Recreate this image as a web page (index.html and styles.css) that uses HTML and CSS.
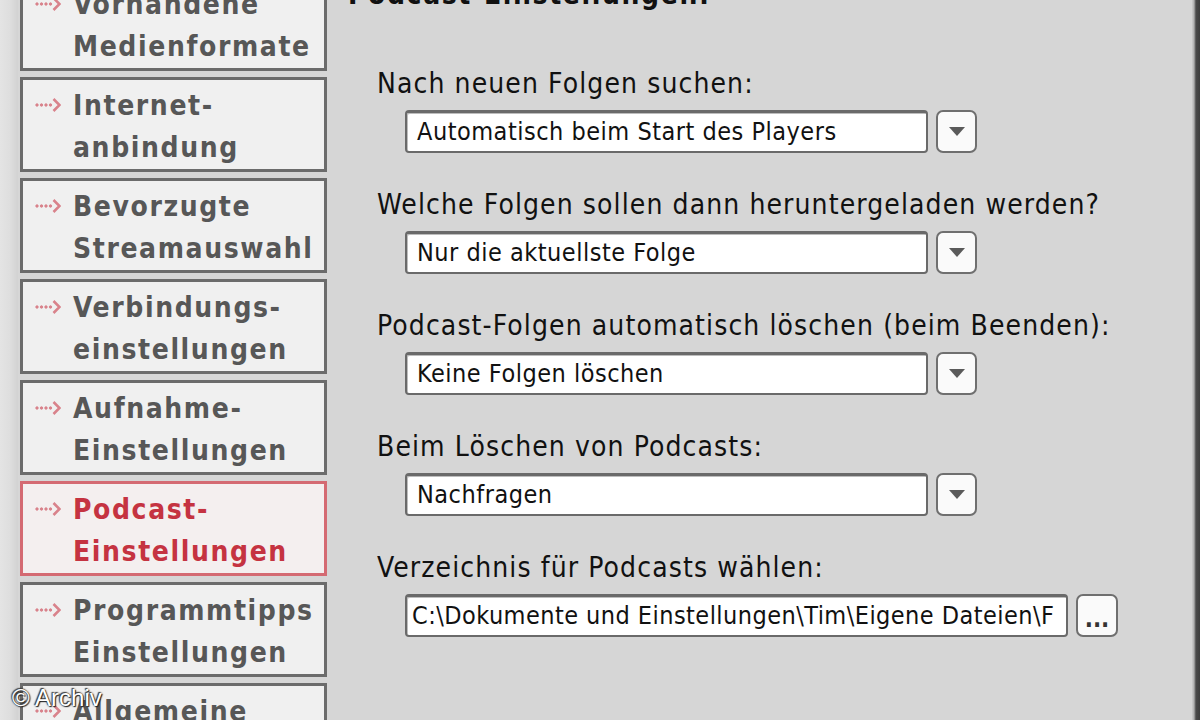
FILE: index.html
```html
<!DOCTYPE html>
<html lang="de">
<head>
<meta charset="utf-8">
<title>Podcast-Einstellungen</title>
<link rel="stylesheet" href="styles.css">
</head>
<body>
<div class="window">
  <nav class="sidebar">
    <div class="strip"></div>
    <ul class="nav">
      <li class="item"><span class="arrow"><svg viewBox="0 0 26 16" width="26" height="16"><circle cx="2" cy="8" r="1.2"/><circle cx="6.5" cy="8" r="1.2"/><circle cx="11" cy="8" r="1.2"/><circle cx="15.5" cy="8" r="1.2"/><path d="M18.5 2 L24.5 8 L18.5 14" fill="none" stroke-width="2.6"/></svg></span><span class="label">Vorhandene<br>Medienformate</span></li>
      <li class="item"><span class="arrow"><svg viewBox="0 0 26 16" width="26" height="16"><circle cx="2" cy="8" r="1.2"/><circle cx="6.5" cy="8" r="1.2"/><circle cx="11" cy="8" r="1.2"/><circle cx="15.5" cy="8" r="1.2"/><path d="M18.5 2 L24.5 8 L18.5 14" fill="none" stroke-width="2.6"/></svg></span><span class="label">Internet-<br>anbindung</span></li>
      <li class="item"><span class="arrow"><svg viewBox="0 0 26 16" width="26" height="16"><circle cx="2" cy="8" r="1.2"/><circle cx="6.5" cy="8" r="1.2"/><circle cx="11" cy="8" r="1.2"/><circle cx="15.5" cy="8" r="1.2"/><path d="M18.5 2 L24.5 8 L18.5 14" fill="none" stroke-width="2.6"/></svg></span><span class="label">Bevorzugte<br>Streamauswahl</span></li>
      <li class="item"><span class="arrow"><svg viewBox="0 0 26 16" width="26" height="16"><circle cx="2" cy="8" r="1.2"/><circle cx="6.5" cy="8" r="1.2"/><circle cx="11" cy="8" r="1.2"/><circle cx="15.5" cy="8" r="1.2"/><path d="M18.5 2 L24.5 8 L18.5 14" fill="none" stroke-width="2.6"/></svg></span><span class="label">Verbindungs-<br>einstellungen</span></li>
      <li class="item"><span class="arrow"><svg viewBox="0 0 26 16" width="26" height="16"><circle cx="2" cy="8" r="1.2"/><circle cx="6.5" cy="8" r="1.2"/><circle cx="11" cy="8" r="1.2"/><circle cx="15.5" cy="8" r="1.2"/><path d="M18.5 2 L24.5 8 L18.5 14" fill="none" stroke-width="2.6"/></svg></span><span class="label">Aufnahme-<br>Einstellungen</span></li>
      <li class="item active"><span class="arrow"><svg viewBox="0 0 26 16" width="26" height="16"><circle cx="2" cy="8" r="1.2"/><circle cx="6.5" cy="8" r="1.2"/><circle cx="11" cy="8" r="1.2"/><circle cx="15.5" cy="8" r="1.2"/><path d="M18.5 2 L24.5 8 L18.5 14" fill="none" stroke-width="2.6"/></svg></span><span class="label">Podcast-<br>Einstellungen</span></li>
      <li class="item"><span class="arrow"><svg viewBox="0 0 26 16" width="26" height="16"><circle cx="2" cy="8" r="1.2"/><circle cx="6.5" cy="8" r="1.2"/><circle cx="11" cy="8" r="1.2"/><circle cx="15.5" cy="8" r="1.2"/><path d="M18.5 2 L24.5 8 L18.5 14" fill="none" stroke-width="2.6"/></svg></span><span class="label">Programmtipps<br>Einstellungen</span></li>
      <li class="item"><span class="arrow"><svg viewBox="0 0 26 16" width="26" height="16"><circle cx="2" cy="8" r="1.2"/><circle cx="6.5" cy="8" r="1.2"/><circle cx="11" cy="8" r="1.2"/><circle cx="15.5" cy="8" r="1.2"/><path d="M18.5 2 L24.5 8 L18.5 14" fill="none" stroke-width="2.6"/></svg></span><span class="label">Allgemeine<br>Einstellungen</span></li>
    </ul>
  </nav>
  <main class="panel">
    <h1 class="title">Podcast-Einstellungen:</h1>
    <div class="field">
      <div class="field-label">Nach neuen Folgen suchen:</div>
      <div class="control">
        <div class="box select">Automatisch beim Start des Players</div>
        <div class="btn"><span class="tri"></span></div>
      </div>
    </div>
    <div class="field">
      <div class="field-label">Welche Folgen sollen dann heruntergeladen werden?</div>
      <div class="control">
        <div class="box select">Nur die aktuellste Folge</div>
        <div class="btn"><span class="tri"></span></div>
      </div>
    </div>
    <div class="field">
      <div class="field-label">Podcast-Folgen automatisch löschen (beim Beenden):</div>
      <div class="control">
        <div class="box select">Keine Folgen löschen</div>
        <div class="btn"><span class="tri"></span></div>
      </div>
    </div>
    <div class="field">
      <div class="field-label">Beim Löschen von Podcasts:</div>
      <div class="control">
        <div class="box select">Nachfragen</div>
        <div class="btn"><span class="tri"></span></div>
      </div>
    </div>
    <div class="field">
      <div class="field-label">Verzeichnis für Podcasts wählen:</div>
      <div class="control">
        <div class="box path">C:\Dokumente und Einstellungen\Tim\Eigene Dateien\F</div>
        <div class="btn dots">...</div>
      </div>
    </div>
  </main>
  <div class="edge"></div>
</div>
<div class="watermark">© Archiv</div>
</body>
</html>
```
FILE: styles.css
```css
html, body {
  margin: 0;
  padding: 0;
  height: 100%;
  overflow: hidden;
}
body {
  background: #d6d6d6;
  font-family: "DejaVu Sans Condensed", "DejaVu Sans", sans-serif;
  color: #111;
}
.window {
  display: flex;
  height: 720px;
  overflow: hidden;
}
.sidebar {
  display: flex;
  width: 336px;
  flex: none;
}
.strip {
  width: 18px;
  flex: none;
  background: linear-gradient(to right, #e4e4e4 0, #dedede 10px, #d2d2d2 18px);
}
.nav {
  list-style: none;
  margin: -24px 0 0 2px;
  padding: 0;
  display: flex;
  flex-direction: column;
  gap: 6px;
  width: 307px;
}
.item {
  flex: none;
  height: 95px;
  box-sizing: border-box;
  border: 3px solid #6b6b6b;
  background: #f0f0f0;
  display: flex;
  align-items: flex-start;
  padding: 5px 0 0 12px;
}
.item.active {
  border-color: #d46a72;
  background: #f4efef;
}
.arrow {
  width: 38px;
  flex: none;
  padding-top: 12px;
}
.arrow svg {
  display: block;
  fill: #d9828b;
  stroke: #d9828b;
}
.label {
  font-weight: bold;
  font-size: 28px;
  line-height: 42px;
  letter-spacing: 1.6px;
  color: #575757;
  white-space: nowrap;
}
.item.active .label {
  color: #c53341;
}
.panel {
  flex: 1;
  padding-left: 12px;
}
.title {
  margin: -20px 0 59px 0;
  font-size: 28px;
  line-height: 30px;
  font-weight: bold;
  letter-spacing: 1.6px;
  color: #111;
}
.field {
  margin: 0 0 37px 29px;
}
.field-label {
  font-size: 28px;
  line-height: 30px;
  letter-spacing: 1.1px;
  color: #111;
  white-space: nowrap;
}
.control {
  display: flex;
  gap: 8px;
  margin: 11px 0 0 28px;
}
.box {
  height: 43px;
  box-sizing: border-box;
  background: #fff;
  border: 2px solid #6a6a6a;
  border-top-width: 3px;
  border-radius: 4px;
  font-size: 25px;
  line-height: 38px;
  letter-spacing: 0.5px;
  padding: 0 0 0 10px;
  color: #111;
  white-space: nowrap;
  overflow: hidden;
  box-shadow: inset 1px 1px 0 #bdbdbd;
}
.select {
  width: 523px;
}
.path {
  width: 663px;
  padding-left: 5px;
  letter-spacing: 0.45px;
}
.btn {
  width: 41px;
  height: 43px;
  box-sizing: border-box;
  border: 2px solid #6f6f6f;
  border-radius: 7px;
  background: #fafafa;
  display: flex;
  align-items: center;
  justify-content: center;
}
.tri {
  width: 0;
  height: 0;
  border-left: 8px solid transparent;
  border-right: 8px solid transparent;
  border-top: 9px solid #5a5a5a;
}
.dots {
  width: 42px;
  font-size: 24px;
  font-weight: bold;
  color: #333;
  align-items: flex-end;
  padding-bottom: 6px;
  line-height: 20px;
}
.edge {
  width: 8px;
  flex: none;
  background: linear-gradient(to right, #cfcfcf 0, #b0b0b0 2px, #7a7a7a 3px, #4a4a4a 4px, #3e3e3e 8px);
}
.watermark {
  position: absolute;
  left: 12px;
  top: 684px;
  font-family: "Liberation Sans", Arial, sans-serif;
  font-size: 24px;
  line-height: 28px;
  color: #fff;
  text-shadow: 0 0 2px #222, 1px 1px 1px #222, -1px -1px 1px #444;
}
```
